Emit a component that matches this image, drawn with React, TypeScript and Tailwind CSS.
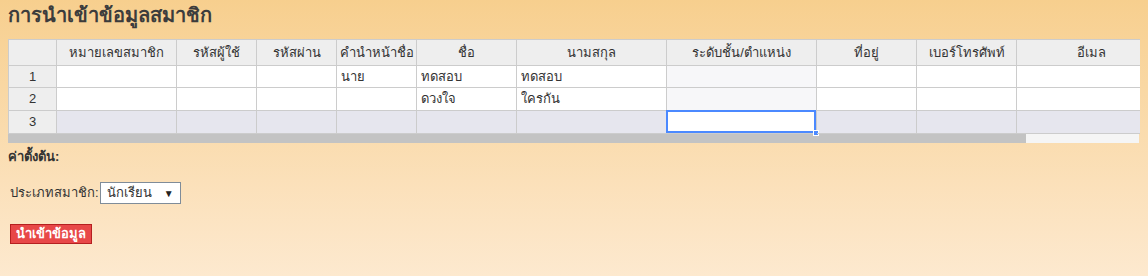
const columns = [
  { title: "หมายเลขสมาชิก", w: "w-[120px]" },
  { title: "รหัสผู้ใช้", w: "w-[80px]" },
  { title: "รหัสผ่าน", w: "w-[80px]" },
  { title: "คำนำหน้าชื่อ", w: "w-[80px]" },
  { title: "ชื่อ", w: "w-[100px]" },
  { title: "นามสกุล", w: "w-[150px]" },
  { title: "ระดับชั้น/ตำแหน่ง", w: "w-[150px]" },
  { title: "ที่อยู่", w: "w-[100px]" },
  { title: "เบอร์โทรศัพท์", w: "w-[100px]" },
  { title: "อีเมล", w: "w-[150px]" },
];

const rows = [
  ["", "", "", "นาย", "ทดสอบ", "ทดสอบ", "", "", "", ""],
  ["", "", "", "", "ดวงใจ", "ใครกัน", "", "", "", ""],
  ["", "", "", "", "", "", "", "", "", ""],
];

const font = { fontFamily: '"Liberation Sans", "Noto Sans", "DejaVu Sans", sans-serif' };

export default function App() {
  return (
    <div
      className="w-[1148px] h-[276px] overflow-hidden bg-gradient-to-b from-[#f7cf8e] to-[#fde9cf] px-2 text-[#333]"
      style={font}
    >
      <h1 className="h-[39px] pt-[2px] text-[20px] leading-[26px] font-bold text-[#3c3c3c]">
        การนำเข้าข้อมูลสมาชิก
      </h1>

      <div className="w-[1132px] overflow-hidden">
        <div className="w-max border-l border-t border-[#cccccc] text-[13px]">
          <div className="flex h-[26px] bg-[#eeeeee]">
            <div className="w-[48px] shrink-0 border-r border-b border-[#cccccc]" />
            {columns.map((c) => (
              <div
                key={c.title}
                className={`${c.w} shrink-0 border-r border-b border-[#cccccc] flex items-center justify-center`}
              >
                {c.title}
              </div>
            ))}
          </div>
          {rows.map((r, i) => (
            <div key={i} className={`flex ${i === 0 ? "h-[22px]" : "h-[23px]"} ${i === 2 ? "bg-[#e6e6ee]" : "bg-white"}`}>
              <div className="w-[48px] shrink-0 border-r border-b border-[#cccccc] bg-[#eeeeee] flex items-center justify-center">
                {i + 1}
              </div>
              {r.map((v, j) => {
                const selected = i === 2 && j === 6;
                const readonly = i < 2 && j === 6;
                return (
                  <div
                    key={j}
                    className={`${columns[j].w} shrink-0 border-r border-b border-[#cccccc] flex items-center px-[4px] relative ${
                      readonly ? "bg-[#f7f7f9]" : ""
                    } ${selected ? "bg-white" : ""}`}
                  >
                    {v}
                    {selected && (
                      <>
                        <div className="absolute -left-px -top-px right-0 bottom-0 border-2 border-[#4b89ff]" />
                        <div className="absolute right-[-3px] bottom-[-3px] w-[6px] h-[6px] bg-[#4b89ff] border border-white" />
                      </>
                    )}
                  </div>
                );
              })}
            </div>
          ))}
        </div>
        <div className="h-[9px] w-[1131px] bg-[#f5f5f5] flex">
          <div className="w-[1018px] h-full bg-[#c3c3c3]" />
        </div>
      </div>

      <div className="mt-[6px] text-[13px] font-bold leading-[16px]">ค่าตั้งต้น:</div>

      <div className="mt-[17px] ml-[2px] flex items-center gap-[1px] text-[13px]">
        <span>ประเภทสมาชิก:</span>
        <div className="w-[81px] h-[22px] bg-white border border-[#7f8c99] flex items-center justify-between pl-[6px] pr-[6px]">
          <span className="text-[13px]">นักเรียน</span>
          <span className="text-[10px] text-[#222]">▼</span>
        </div>
      </div>

      <button className="mt-[20px] ml-[2px] h-[20px] px-[5px] bg-[#e84848] border border-[#b52020] text-white text-[13px] font-bold leading-[18px]">
        นำเข้าข้อมูล
      </button>
    </div>
  );
}
